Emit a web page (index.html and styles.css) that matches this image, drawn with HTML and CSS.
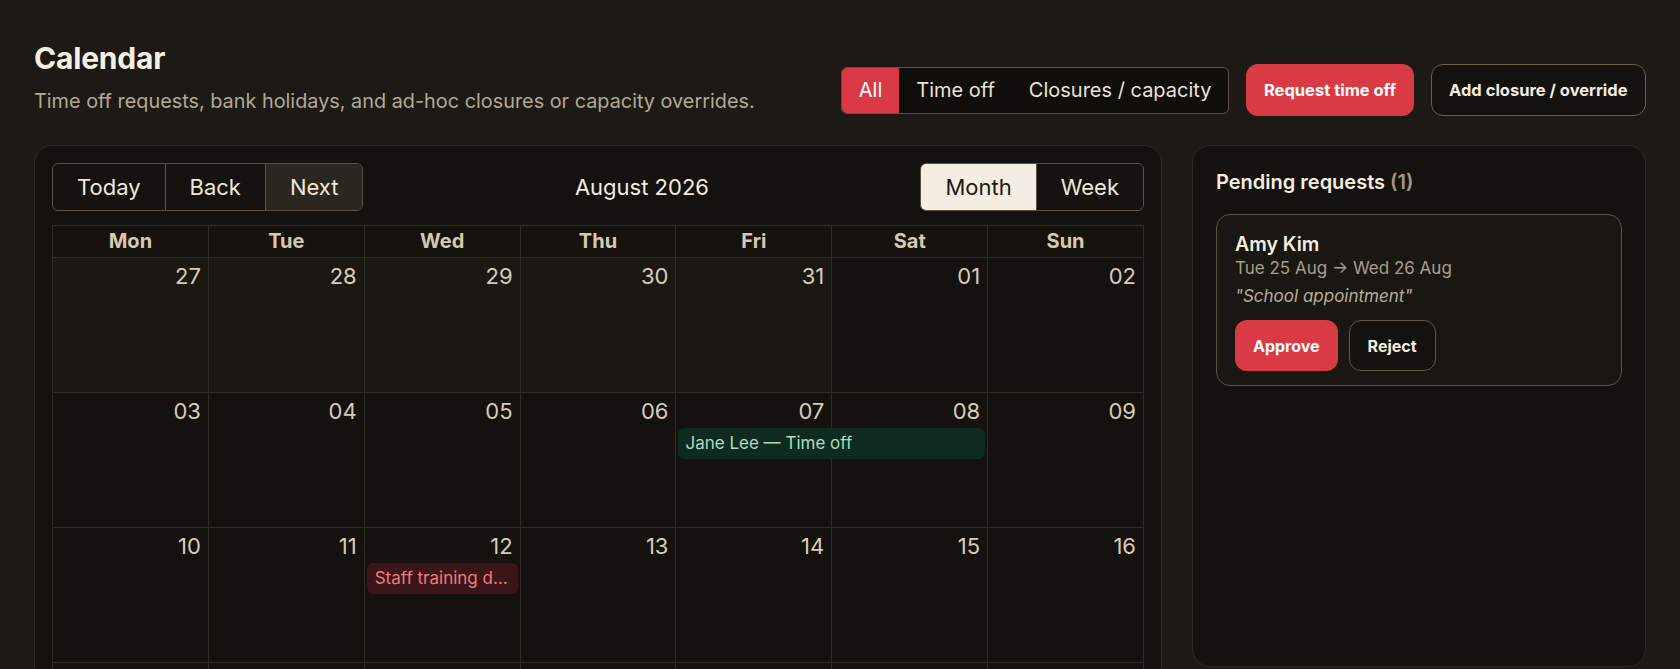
FILE: index.html
```html
<!DOCTYPE html>
<html lang="en">
<head>
<meta charset="utf-8">
<title>Calendar</title>
<link rel="stylesheet" href="styles.css">
</head>
<body>
<div class="page">
  <header class="page-head">
    <div class="head-text">
      <h1 class="title">Calendar</h1>
      <p class="subtitle">Time off requests, bank holidays, and ad-hoc closures or capacity overrides.</p>
    </div>
    <div class="head-actions">
      <div class="seg">
        <button class="seg-btn active">All</button>
        <button class="seg-btn">Time off</button>
        <button class="seg-btn">Closures / capacity</button>
      </div>
      <button class="btn btn-primary">Request time off</button>
      <button class="btn btn-outline">Add closure / override</button>
    </div>
  </header>

  <div class="layout">
    <section class="card cal-card">
      <div class="toolbar">
        <div class="group">
          <button class="g-btn">Today</button>
          <button class="g-btn">Back</button>
          <button class="g-btn hover">Next</button>
        </div>
        <div class="cal-label">August 2026</div>
        <div class="group">
          <button class="g-btn on">Month</button>
          <button class="g-btn">Week</button>
        </div>
      </div>

      <div class="month">
        <div class="dow-row">
          <div class="dow">Mon</div><div class="dow">Tue</div><div class="dow">Wed</div><div class="dow">Thu</div><div class="dow">Fri</div><div class="dow">Sat</div><div class="dow">Sun</div>
        </div>

        <div class="week">
          <div class="day off"><span class="num">27</span></div>
          <div class="day off"><span class="num">28</span></div>
          <div class="day off"><span class="num">29</span></div>
          <div class="day off"><span class="num">30</span></div>
          <div class="day off"><span class="num">31</span></div>
          <div class="day"><span class="num">01</span></div>
          <div class="day"><span class="num">02</span></div>
        </div>

        <div class="week">
          <div class="day"><span class="num">03</span></div>
          <div class="day"><span class="num">04</span></div>
          <div class="day"><span class="num">05</span></div>
          <div class="day"><span class="num">06</span></div>
          <div class="day"><span class="num">07</span></div>
          <div class="day"><span class="num">08</span></div>
          <div class="day"><span class="num">09</span></div>
          <div class="event ev-green" style="grid-column: 5 / span 2;">Jane Lee — Time off</div>
        </div>

        <div class="week">
          <div class="day"><span class="num">10</span></div>
          <div class="day"><span class="num">11</span></div>
          <div class="day"><span class="num">12</span></div>
          <div class="day"><span class="num">13</span></div>
          <div class="day"><span class="num">14</span></div>
          <div class="day"><span class="num">15</span></div>
          <div class="day"><span class="num">16</span></div>
          <div class="event ev-red" style="grid-column: 3 / span 1;">Staff training day (closed)</div>
        </div>

        <div class="week">
          <div class="day"><span class="num">17</span></div>
          <div class="day"><span class="num">18</span></div>
          <div class="day"><span class="num">19</span></div>
          <div class="day"><span class="num">20</span></div>
          <div class="day"><span class="num">21</span></div>
          <div class="day"><span class="num">22</span></div>
          <div class="day"><span class="num">23</span></div>
        </div>

        <div class="week">
          <div class="day"><span class="num">24</span></div>
          <div class="day"><span class="num">25</span></div>
          <div class="day"><span class="num">26</span></div>
          <div class="day"><span class="num">27</span></div>
          <div class="day"><span class="num">28</span></div>
          <div class="day"><span class="num">29</span></div>
          <div class="day"><span class="num">30</span></div>
        </div>

        <div class="week">
          <div class="day"><span class="num">31</span></div>
          <div class="day off"><span class="num">01</span></div>
          <div class="day off"><span class="num">02</span></div>
          <div class="day off"><span class="num">03</span></div>
          <div class="day off"><span class="num">04</span></div>
          <div class="day off"><span class="num">05</span></div>
          <div class="day off"><span class="num">06</span></div>
        </div>
      </div>
    </section>

    <aside class="card side-card">
      <h2 class="side-title">Pending requests <span class="count">(1)</span></h2>
      <div class="req">
        <div class="req-name">Amy Kim</div>
        <div class="req-dates">Tue 25 Aug → Wed 26 Aug</div>
        <div class="req-note">"School appointment"</div>
        <div class="req-actions">
          <button class="btn-sm btn-approve">Approve</button>
          <button class="btn-sm btn-reject">Reject</button>
        </div>
      </div>
    </aside>
  </div>
</div>
</body>
</html>
```

FILE: styles.css
```css
* { box-sizing: border-box; }

html, body {
  margin: 0;
  padding: 0;
  background: #1d1a15;
  color: #f3ece0;
  font-family: "Inter", "Noto Sans", sans-serif;
}

button {
  font-family: inherit;
  cursor: pointer;
}

.page {
  padding: 40px 34px 40px;
}

/* Header */
.page-head {
  display: flex;
  justify-content: space-between;
  align-items: flex-end;
  margin-bottom: 29px;
}

.title {
  margin: 0;
  font-size: 30px;
  line-height: 36px;
  font-weight: 700;
  color: #f6f0e4;
  letter-spacing: -0.2px;
}

.subtitle {
  margin: 10px 0 0;
  font-size: 19.85px;
  line-height: 30px;
  color: #b4a994;
}

.head-actions {
  display: flex;
  align-items: center;
  gap: 17px;
}

.seg {
  display: flex;
  height: 47px;
  border: 1px solid #5c5345;
  border-radius: 6px;
  overflow: hidden;
  background: #100e0b;
}

.seg-btn {
  border: 0;
  background: transparent;
  color: #ebe3d4;
  font-size: 20px;
  padding: 0 17px;
}

.seg-btn.active {
  background: #d93a45;
  color: #ffffff;
}

.btn {
  height: 52px;
  border-radius: 12px;
  font-size: 16.5px;
  font-weight: 700;
  padding: 0 17.5px;
}

.btn-primary {
  background: #d93b45;
  border: 0;
  color: #ffffff;
}

.btn-outline {
  background: #14120e;
  border: 1px solid #6a604f;
  color: #f3ece0;
}

/* Layout */
.layout {
  display: grid;
  grid-template-columns: 1fr 454px;
  gap: 30px;
  align-items: start;
}

.card {
  background: #14120e;
  border: 1px solid #2e2a23;
  border-radius: 18px;
}

.cal-card {
  padding: 17px;
}

/* Toolbar */
.toolbar {
  display: flex;
  align-items: center;
  margin-bottom: 14px;
}

.group {
  display: flex;
  border: 1px solid #5a5244;
  border-radius: 6px;
  overflow: hidden;
  background: #15120f;
}

.g-btn {
  height: 46px;
  border: 0;
  background: transparent;
  color: #efe7d8;
  font-size: 22px;
  padding: 0 24px;
}

.g-btn + .g-btn {
  border-left: 1px solid #5a5244;
}

.g-btn.hover {
  background: #2b261f;
}

.g-btn.on {
  background: #f4eee2;
  color: #1c1813;
}

.cal-label {
  flex: 1;
  text-align: center;
  font-size: 22px;
  font-weight: 400;
  color: #f3ece0;
}

/* Month grid */
.month {
  display: flex;
  flex-direction: column;
  gap: 1px;
  background: #302b24;
  border: 1px solid #302b24;
}

.dow-row {
  display: grid;
  grid-template-columns: repeat(7, minmax(0, 1fr));
  column-gap: 1px;
}

.dow {
  height: 31px;
  line-height: 31px;
  text-align: center;
  font-size: 20px;
  font-weight: 700;
  color: #d6c9b0;
  background: #16130f;
}

.week {
  display: grid;
  grid-template-columns: repeat(7, minmax(0, 1fr));
  grid-template-rows: 35px auto 1fr;
  column-gap: 1px;
  height: 134px;
}

.day {
  grid-row: 1 / 4;
  background: #14110e;
  text-align: right;
  padding: 5px 7px 0;
}

.day:nth-child(1) { grid-column: 1; }
.day:nth-child(2) { grid-column: 2; }
.day:nth-child(3) { grid-column: 3; }
.day:nth-child(4) { grid-column: 4; }
.day:nth-child(5) { grid-column: 5; }
.day:nth-child(6) { grid-column: 6; }
.day:nth-child(7) { grid-column: 7; }

.day.off {
  background: #1b1814;
}

.num {
  font-size: 22px;
  line-height: 26px;
  color: #d8ccb7;
}

.event {
  grid-row: 2;
  margin: 0 2px;
  height: 31px;
  line-height: 31px;
  border-radius: 6px;
  padding: 0 8px;
  font-size: 17px;
  white-space: nowrap;
  overflow: hidden;
  text-overflow: ellipsis;
  min-width: 0;
}

.ev-green {
  background: #0f2a1f;
  color: #a8dfbd;
  padding-left: 7px;
}

.ev-red {
  background: #3b1518;
  color: #f07a7c;
}

/* Side card */
.side-card {
  padding: 23px 23px 280px;
}

.side-title {
  margin: 0 0 19px;
  font-size: 20px;
  line-height: 26px;
  font-weight: 600;
  color: #f4ede1;
}

.count {
  color: #a5977f;
}

.req {
  background: #1a1713;
  border: 1px solid #5a5244;
  border-radius: 14px;
  padding: 17px 18px 14px;
}

.req-name {
  font-size: 19.5px;
  line-height: 24px;
  font-weight: 600;
  color: #f4ede1;
}

.req-dates {
  margin-top: 1px;
  font-size: 17px;
  line-height: 22px;
  color: #a99e8b;
}

.req-note {
  margin-top: 6px;
  font-size: 17px;
  line-height: 22px;
  font-style: italic;
  color: #b8ad99;
}

.req-actions {
  display: flex;
  gap: 11px;
  margin-top: 13px;
}

.btn-sm {
  height: 51px;
  border-radius: 12px;
  font-size: 16px;
  font-weight: 700;
  padding: 0 18px;
}

.btn-approve {
  background: #d93b45;
  border: 0;
  color: #ffffff;
}

.btn-reject {
  background: #14120e;
  border: 1px solid #5f5646;
  color: #f3ece0;
}
```
